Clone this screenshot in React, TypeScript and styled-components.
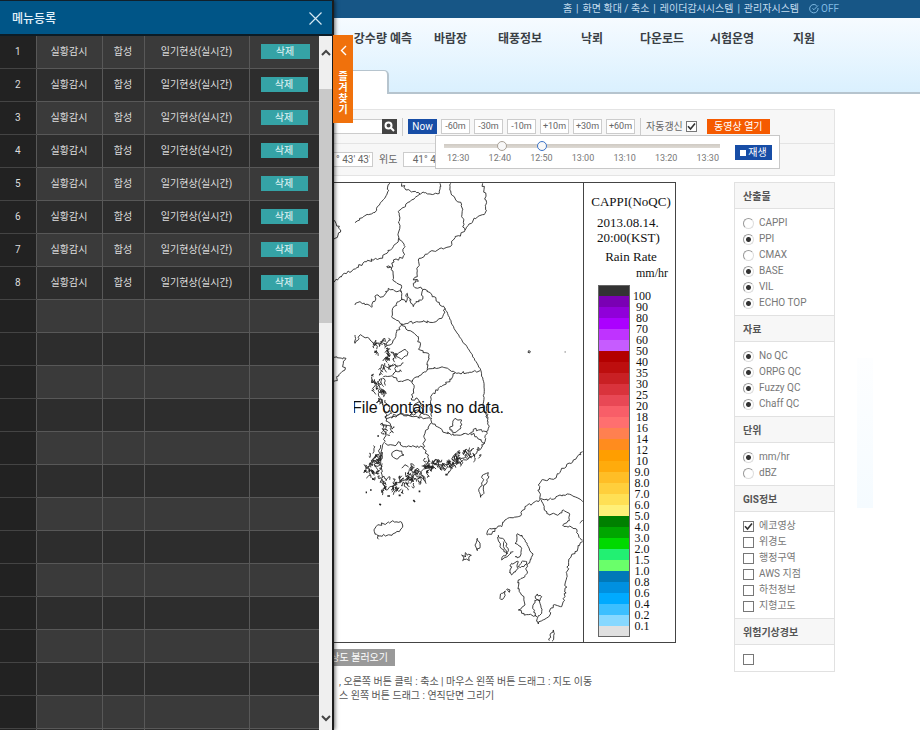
import React from "react";
import styled, { createGlobalStyle } from "styled-components";

const GlobalStyle = createGlobalStyle`
  *, *::before, *::after { box-sizing: border-box; }
  body {
    margin: 0;
    background: #fff;
    color: #666;
    font: 10px/16px Roboto, "Noto Sans CJK KR", sans-serif;
  }
  button, input { font: inherit; margin: 0; }
  button { border: 0; padding: 0; cursor: pointer; white-space: nowrap; }
  a { color: inherit; text-decoration: none; }
`;

/* ---------- shell ---------- */
const Shell = styled.div`
  display: grid;
  grid-template-columns: 334px minmax(0, 1fr);
  height: 100vh;
  overflow: hidden;
`;

/* ---------- drawer ---------- */
const Drawer = styled.aside`
  position: relative;
  z-index: 2;
  display: flex;
  flex-direction: column;
  min-height: 0;
  background: #222;
  border-top: 1px solid #10202c;
  border-right: 2px solid #1c1c1c;
  box-shadow: 1px 0 4px rgba(0, 0, 0, 0.6);
`;
const DrawerHead = styled.header`
  display: flex;
  flex: none;
  align-items: center;
  justify-content: space-between;
  height: 35px;
  padding: 2px 10px 0 12px;
  background: #005587;
  border-bottom: 2px solid #0c1c26;
`;
const DrawerTitle = styled.h2`
  margin: 0;
  font-size: 12px;
  font-weight: 500;
  color: #e2f1fa;
`;
const CloseButton = styled.button`
  display: flex;
  background: none;
  color: #d5e8f3;
`;
const DrawerBody = styled.div`
  display: flex;
  flex: 1;
  min-height: 0;
`;
const TableClip = styled.div`
  flex: 1;
  overflow: hidden;
`;
const MenuTable = styled.table`
  width: 100%;
  table-layout: fixed;
  border-collapse: collapse;
  color: #ddd;
`;
const MenuRow = styled.tr<{ $first?: boolean }>`
  height: ${(p) => (p.$first ? 32 : 33)}px;
  background: #3a3a3a;
  &:nth-child(even) { background: #2d2d2d; }
`;
const Cell = styled.td`
  padding: 0;
  text-align: center;
  white-space: nowrap;
  border-bottom: 1px solid #585858;
  border-left: 1px solid #585858;
`;
const NumberCell = styled.th`
  padding: 0;
  font-weight: 400;
  background: #222;
  border-bottom: 1px solid #444;
`;
const DeleteButton = styled.button<{ $wide?: boolean }>`
  width: ${(p) => (p.$wide ? 49 : 47)}px;
  height: 15px;
  line-height: 15px;
  background: #35a3a6;
  color: #e4f6f6;
  display: block;
  margin-left: 11px;
`;
const ScrollRail = styled.div`
  display: flex;
  flex-direction: column;
  width: 13px;
  background: #efefef;
`;
const ScrollButton = styled.button<{ $tall?: boolean }>`
  display: flex;
  align-items: center;
  justify-content: center;
  height: ${(p) => (p.$tall ? 32 : 24)}px;
  background: none;
  color: #444;
`;
const ScrollTrack = styled.div`
  flex: 1;
  padding-top: 21px;
`;
const ScrollThumb = styled.div`
  height: 38%;
  background: #c9c9c9;
`;
const DrawerTab = styled.button`
  position: absolute;
  top: 34px;
  left: 100%;
  display: flex;
  flex-direction: column;
  align-items: center;
  gap: 15px;
  width: 20px;
  height: 88px;
  padding-top: 10px;
  margin-left: 1px;
  background: #f0710c;
  color: #fff;
  font-weight: 700;
  line-height: 11px;
`;
const TabLabel = styled.span`
  width: 10px;
  white-space: normal;
  word-break: break-all;
`;

/* ---------- page ---------- */
const Page = styled.div`
  min-width: 0;
  overflow: hidden;
`;
const TopBar = styled.nav`
  display: flex;
  align-items: center;
  justify-content: flex-end;
  gap: 4px;
  height: 18px;
  padding-right: 81px;
  background: #175686;
  color: #c4dcee;
  white-space: nowrap;
`;
const Toggle = styled.button`
  display: flex;
  align-items: center;
  gap: 2px;
  margin-left: 6px;
  background: none;
  color: #7fb9e2;
`;
const MainHead = styled.header`
  display: flex;
  flex-direction: column;
  justify-content: space-between;
  height: 76px;
  background: linear-gradient(#f6fbff, #daf0fe);
  border-bottom: 2px solid #b6c4ce;
`;
const MainNav = styled.nav`
  display: grid;
  grid-template-columns: 78px 64px 83px 59px 70px 83px 50px;
  height: 43px;
  line-height: 43px;
  font-size: 12px;
  font-weight: 700;
  color: #3a3f45;
  white-space: nowrap;
`;
const NavLink = styled.a<{ $clip?: boolean }>`
  padding-left: ${(p) => (p.$clip ? 0 : 22)}px;
  ${(p) => p.$clip && "display:flex; justify-content:flex-end;"}
`;
const PageTab = styled.div`
  width: 55px;
  height: 24px;
  margin-bottom: -2px;
  background: #fff;
  border: 1px solid #b6c4ce;
  border-width: 1px 2px 0 0;
  border-radius: 0 5px 0 0;
`;
const Filters = styled.section`
  position: relative;
  margin: 15px 85px 0 0;
  height: 67px;
  background: #f7f7f7;
  border: 1px solid #e4e4e4;
  border-left: 0;
`;
const FilterRow = styled.div`
  display: flex;
  align-items: center;
  height: 34px;
  border-bottom: 1px solid #e4e4e4;
  white-space: nowrap;
`;
const SearchInput = styled.input`
  width: 48px;
  height: 15px;
  border: 1px solid #ccc;
  border-width: 1px 0;
  background: #fff;
`;
const SearchButton = styled.button`
  display: flex;
  align-items: center;
  justify-content: center;
  width: 15px;
  height: 15px;
  background: #444;
  color: #fff;
`;
const Rule = styled.span<{ $gap?: number }>`
  width: 1px;
  height: 18px;
  margin: 0 ${(p) => p.$gap || 5}px;
  background: #ccc;
`;
const Solid = styled.button<{ $tone: "blue" | "orange"; $w: number }>`
  width: ${(p) => p.$w}px;
  height: 15px;
  line-height: 15px;
  background: ${(p) => (p.$tone === "blue" ? "#174da6" : "#f55a00")};
  color: #fff;
`;
const Steps = styled.div`
  display: flex;
  gap: 4px;
  margin-left: 4px;
`;
const Step = styled.button`
  width: 29px;
  height: 15px;
  line-height: 13px;
  font-size: 9px;
  background: #fff;
  border: 1px solid #ccc;
  color: #666;
`;
const AutoLabel = styled.label`
  display: flex;
  align-items: center;
  gap: 3px;
  margin-right: 10px;
`;
const CoordRow = styled.div`
  display: flex;
  align-items: center;
  height: 31px;
  gap: 6px;
`;
const CoordInput = styled.input<{ $w: number }>`
  width: ${(p) => p.$w}px;
  height: 15px;
  padding: 0 2px;
  border: 1px solid #ccc;
  border-left-width: ${(p) => (p.$w > 40 ? 1 : 0)}px;
  background: #fff;
  color: #666;
  text-align: ${(p) => (p.$w > 40 ? "center" : "right")};
`;
const Player = styled.div`
  position: absolute;
  top: 25px;
  left: 101px;
  display: flex;
  align-items: center;
  justify-content: space-between;
  width: 345px;
  height: 34px;
  padding: 0 7px 0 8px;
  background: #fff;
  border: 1px solid #c8c8c8;
`;
const Timeline = styled.div`
  width: 276px;
`;
const Sliders = styled.div`
  display: grid;
  height: 12px;
  align-items: center;
  background: linear-gradient(#cfcac3, #dedad4) center / 100% 4px no-repeat;
`;
const Range = styled.input<{ $active?: boolean }>`
  grid-area: 1 / 1;
  appearance: none;
  width: 100%;
  height: 12px;
  background: none;
  pointer-events: none;
  &::-webkit-slider-thumb {
    appearance: none;
    pointer-events: auto;
    width: 10px;
    height: 10px;
    border-radius: 50%;
    background: #f8f8f8;
    border: 1px solid ${(p) => (p.$active ? "#3c74c8" : "#a9a196")};
  }
`;
const Times = styled.div`
  display: flex;
  justify-content: space-between;
  padding: 0 1px 0 3px;
  line-height: 12px;
  font-size: 9px;
  color: #777;
`;
const PlayIcon = styled.i`
  display: inline-block;
  width: 6px;
  height: 6px;
  margin-right: 2px;
  background: #fff;
`;
const Content = styled.main`
  display: grid;
  grid-template-columns: minmax(0, 1fr) 101px 16px;
  padding: 6px 47px 0 0;
  column-gap: 22px;
`;
const MapColumn = styled.div`
  min-width: 0;
  padding-right: 36px;
`;
const MapBox = styled.section`
  display: grid;
  grid-template-columns: minmax(0, 1fr) 92px;
  border: 1px solid #444;
  border-left: 0;
`;
const MapArea = styled.div`
  position: relative;
  overflow: hidden;
`;
const MapSvg = styled.svg`
  display: block;
  width: 100%;
  height: 459px;
`;
const NoData = styled.p`
  position: absolute;
  top: 215px;
  left: 20px;
  margin: 0;
  overflow: hidden;
  display: flex;
  justify-content: flex-end;
  width: 150px;
  font: 16px/20px "Liberation Sans", sans-serif;
  color: #111;
  white-space: nowrap;
`;
const Legend = styled.div`
  border-left: 1px solid #444;
  padding: 11px 3px 0 6px;
  font: 13px/15px "Liberation Serif", serif;
  color: #111;
  white-space: nowrap;
`;
const LegendLine = styled.div<{ $align?: string; $gap?: number; $small?: boolean }>`
  text-align: ${(p) => p.$align || "left"};
  margin-bottom: ${(p) => p.$gap || 0}px;
  padding: 0 ${(p) => (p.$small ? 4 : 0)}px 0 ${(p) => (p.$align ? 0 : 7)}px;
  font-size: ${(p) => (p.$small ? 12 : 13)}px;
`;
const Scale = styled.div`
  display: flex;
  gap: 3px;
  padding-left: 8px;
`;
const Swatches = styled.div`
  width: 32px;
  height: 352px;
  border: 1px solid #666;
`;
const Swatch = styled.div<{ $c: string; $end?: boolean }>`
  height: ${(p) => (p.$end ? 10 : 11)}px;
  background: ${(p) => p.$c};
`;
const Ticks = styled.div`
  padding-top: 6px;
  min-width: 17px;
  text-align: center;
  font-size: 12px;
  line-height: 11px;
`;

const Caption = styled.div`
  margin-top: 6px;
`;
const LoadButton = styled.button`
  display: flex;
  justify-content: flex-end;
  width: 61px;
  height: 17px;
  padding-right: 7px;
  overflow: hidden;
  line-height: 17px;
  background: #999;
  color: #fff;
`;
const Help = styled.p`
  margin: 9px 0 0 5px;
  line-height: 14px;
  color: #555;
  white-space: pre-line;
`;

/* ---------- side options ---------- */
const Side = styled.aside`
  align-self: start;
  border: 1px solid #e1e1e1;
  border-top: 0;
`;
const Group = styled.fieldset`
  margin: 0;
  padding: 0;
  border: 0;
  min-width: 0;
`;
const GroupTitle = styled.legend`
  display: block;
  width: 100%;
  height: 27px;
  padding: 0 8px;
  line-height: 27px;
  font-weight: 700;
  color: #555;
  background: #f7f7f7;
  border: 1px solid #e1e1e1;
  border-width: 1px 0;
`;
const Options = styled.div`
  padding: 6px 8px 4px;
`;
const Option = styled.label`
  display: flex;
  align-items: center;
  gap: 5px;
  height: 16px;
  color: #777;
  white-space: nowrap;
`;
const Mark = styled.input`
  appearance: none;
  flex: none;
  width: 11px;
  height: 11px;
  background: #fff;
  border: 1px solid #777;
  &[type="radio"] {
    border-radius: 50%;
    border-color: #999 #ddd #ddd #999;
  }
  &[type="radio"]:checked {
    background: radial-gradient(circle, #333 0 2px, #fff 3px);
  }
  &[type="checkbox"]:checked {
    background: url("data:image/svg+xml,%3Csvg xmlns='http://www.w3.org/2000/svg' viewBox='0 0 9 9'%3E%3Cpath d='M1 4.2 3.5 7 8 1.5' fill='none' stroke='%23333' stroke-width='1.6'/%3E%3C/svg%3E") center / 9px no-repeat #fff;
  }
`;
const QuickStrip = styled.div`
  height: 150px;
  margin-top: 176px;
  background: linear-gradient(#fdfeff, #f5fbff);
`;

/* ---------- coastline drawing ---------- */
type Pt = [number, number];

function seeded(seed: number) {
  let s = seed;
  return () => {
    s = (s * 16807) % 2147483647;
    return s / 2147483647 - 0.5;
  };
}

/* Breaks each segment into short steps with a little noise, like a digitised coast. */
function coast(text: string, amount = 8): string {
  const pts = text.trim().split(/\s+/).map((p) => p.split(",").map(Number) as Pt);
  const rnd = seeded(Math.abs(Math.round(pts[0][0] * 31 + pts[0][1] * 17)) + 7);
  let d = `M${pts[0][0]} ${pts[0][1]}`;
  for (let i = 1; i < pts.length; i++) {
    const [ax, ay] = pts[i - 1];
    const [bx, by] = pts[i];
    const n = Math.max(1, Math.round(Math.hypot(bx - ax, by - ay) / 6));
    for (let k = 1; k <= n; k++) {
      const j = k === n ? 0 : amount;
      d += `L${(ax + ((bx - ax) * k) / n + rnd() * j).toFixed(1)} ${(ay + ((by - ay) * k) / n + rnd() * j).toFixed(1)}`;
    }
  }
  return d;
}

function islets(cx: number, cy: number, rx: number, ry: number, count: number): string {
  const rnd = seeded(cx * 13 + cy * 7 + 3);
  let d = "";
  for (let i = 0; i < count; i++) {
    let x = cx + rnd() * 2 * rx;
    let y = cy + rnd() * 2 * ry;
    d += `M${x.toFixed(1)} ${y.toFixed(1)}`;
    for (let k = 0; k < 4; k++) {
      x += rnd() * 14;
      y += rnd() * 18;
      d += `L${x.toFixed(1)} ${y.toFixed(1)}`;
    }
  }
  return d;
}

const north = [
  "180,10 170,45 150,70 130,98 100,110 75,128",
  "215,10 228,30 260,38 300,42 328,40 330,10",
  "270,42 240,65 205,95 208,150 205,180 190,200 150,235 110,245 70,268 30,290 8,308",
  "208,175 225,200 218,235 190,240 185,262 170,260 185,264 188,300 215,320 214,360 188,385 185,410 215,432",
  "362,10 365,45 395,75 395,110 405,150",
  "458,10 468,60 465,100 430,120 405,150 370,180 360,200 300,215 265,240 262,290 250,300 265,304 250,310 252,320 285,328 345,385",
  "75,375 90,365 125,382 140,345 160,350 175,325 215,335",
  "215,355 228,367 232,340 250,380 258,365 275,360 278,330",
  "345,385 338,410 318,425 260,425 215,432 200,455 195,475 180,495 150,490 130,495 120,480 90,465 75,490 75,465",
  "215,432 240,452 265,470 270,510 295,520 292,570 248,600 205,605 190,590 160,590",
  "292,570 340,562 380,580 450,572",
  "248,600 250,630 245,660 262,655 282,680",
  "375,580 360,605 325,625 302,650 305,710",
  "205,520 225,508 232,525 215,538 200,530 205,520",
  "8,118 18,130 32,150 15,175 8,185",
  "8,530 48,535 40,550 45,570 20,590 22,602 8,605",
  "150,600 145,640 158,670 170,715 210,700 250,705 262,690 300,712",
];
const south = [
  "165,0 185,40 165,50 185,80 160,75 165,110 155,150 150,165",
  "185,55 210,42 250,50 305,55 305,68",
  "165,130 195,138 205,125 220,140 280,142 285,100 305,68 345,98 380,105 420,100",
  "245,50 250,20 270,5 280,40 265,55",
  "280,142 300,185",
  "185,162 195,152 215,153 222,165 205,175 190,172 185,162",
  "360,90 375,55 395,60 390,88 375,98 360,90",
  "475,10 470,40 475,85 465,125 440,160 410,180 385,190 350,195 315,190 290,205 250,225 225,240 200,250 170,270 155,235 150,165",
  "465,130 440,110 422,98 430,88 445,90 470,95",
  "458,225 475,218 475,235 462,255 462,280 452,292 447,275 458,245 458,225",
  "133,395 140,378 175,366 212,365 218,375 208,395 180,405 145,408 133,395",
  "145,405 146,418",
];
const kyushu = [
  "398,155 370,180 335,205 315,235 275,240 265,255 270,298 225,320 205,350 165,360 155,380 120,385 112,405 125,403 135,385",
  "270,298 305,298 330,285 365,285 398,305",
  "275,300 290,340 325,345 340,330 358,340 358,362 338,375 375,385 390,415 398,420",
  "398,425 375,455 360,475 350,520 345,590 335,620 310,615 298,635 300,645 265,672 262,655 275,640 270,610 255,590 262,582 275,590 270,602 255,600 248,625 260,650 215,640 205,630 225,615 222,590 208,575 205,540 225,530 235,490 248,465 235,440 215,405 200,405 195,430 215,445 210,470 195,470",
  "145,405 165,425 175,450 155,480 190,455",
  "145,410 150,440 172,462 160,425",
  "185,490 205,485 205,505 185,525 180,510 185,490",
  "205,500 215,485 230,485 222,500 205,500",
  "82,415 90,432 82,452 75,435 82,415",
  "35,465 48,470 46,458 52,466 64,466 56,474 58,482 48,478 38,482 42,474 35,465",
  "152,598 155,580 166,573 158,598 152,598",
  "170,568 180,570 178,577 170,568",
  "298,722 300,705 310,690 313,700 306,724",
  "398,360 390,370",
];

const Coastlines = () => (
  <MapSvg viewBox="334 183 250 459" preserveAspectRatio="xMinYMin slice" aria-label="한반도 해안선">
    <g fill="none" stroke="#222" strokeWidth="2.6" strokeLinejoin="round">
      <g transform="translate(330 180) scale(.3333)">
        {north.map((p) => <path key={p} d={coast(p)} />)}
        <path d={coast("345,385 375,450 420,515 450,565 462,610 460,690 475,715", 3)} />
        <path d={islets(155, 500, 22, 18, 14) + islets(175, 555, 28, 40, 24) + islets(145, 610, 16, 22, 14) + islets(155, 650, 8, 25, 8)} />
        <path d="M596 512l5 2 -2 5 -5 -2ZM704 516h3" />
      </g>
      <g transform="translate(330 400) scale(.3333)">
        {south.map((p) => <path key={p} d={coast(p)} />)}
        <path d={islets(130, 205, 24, 34, 30) + islets(140, 172, 18, 14, 12) + islets(192, 256, 36, 16, 20) + islets(230, 240, 24, 18, 16) + islets(268, 218, 34, 26, 26) + islets(308, 194, 26, 16, 20) + islets(350, 192, 20, 10, 12) + islets(382, 185, 20, 24, 20) + islets(425, 160, 24, 14, 12) + islets(172, 90, 16, 20, 7)} />
        <path d="M172 288h8M206 286h6M148 312l5 3M250 300l5 6M346 224h7M107 277h4M142 108h5M266 274h5M120 270h5" strokeWidth="5" />
      </g>
      <g transform="translate(450 400) scale(.3333)">
        {kyushu.map((p) => <path key={p} d={coast(p)} />)}
      </g>
    </g>
  </MapSvg>
);

/* ---------- data ---------- */
const colours = [
  "#333333", "#7a00b4", "#9000d9", "#ab00ff", "#bf33ff", "#c65cff",
  "#b30000", "#bd0e0e", "#c92024", "#d9333c", "#e84855", "#f85e68", "#ff6f6f",
  "#ff8050", "#ff8c1e", "#ff9e00", "#ffab0c", "#ffbe26", "#ffcf3c", "#ffe055", "#fff078",
  "#008000", "#00a600", "#00d900", "#22f072", "#6aff6a",
  "#0078b8", "#0090e0", "#00aaff", "#3cbfff", "#87d8ff", "#e0e0e0",
];
const ticks = "100 90 80 70 60 50 40 35 30 25 20 18 16 14 12 10 9.0 8.0 7.0 6.0 5.0 4.0 3.0 2.0 1.5 1.0 0.8 0.6 0.4 0.2 0.1".split(" ");
const steps = ["-60m", "-30m", "-10m", "+10m", "+30m", "+60m"];
const times = ["12:30", "12:40", "12:50", "13:00", "13:10", "13:20", "13:30"];
const nav = ["바람장", "태풍정보", "낙뢰", "다운로드", "시험운영", "지원"];
const groups: { title: string; type: "radio" | "checkbox"; items: [string, boolean][] }[] = [
  { title: "산출물", type: "radio", items: [["CAPPI", false], ["PPI", true], ["CMAX", false], ["BASE", true], ["VIL", true], ["ECHO TOP", true]] },
  { title: "자료", type: "radio", items: [["No QC", true], ["ORPG QC", true], ["Fuzzy QC", true], ["Chaff QC", true]] },
  { title: "단위", type: "radio", items: [["mm/hr", true], ["dBZ", false]] },
  { title: "GIS정보", type: "checkbox", items: [["에코영상", true], ["위경도", false], ["행정구역", false], ["AWS 지점", false], ["하천정보", false], ["지형고도", false]] },
  { title: "위험기상경보", type: "checkbox", items: [["", false]] },
];

const Chevron = ({ d, w, h }: { d: string; w: number; h: number }) => (
  <svg width={w} height={h} viewBox={`0 0 ${w} ${h}`} fill="none" stroke="currentColor" strokeWidth="2">
    <path d={d} />
  </svg>
);

export default function App() {
  return (
    <>
      <GlobalStyle />
      <Shell>
        <Drawer>
          <DrawerHead>
            <DrawerTitle>메뉴등록</DrawerTitle>
            <CloseButton aria-label="닫기">
              <svg width="13" height="13" viewBox="0 0 13 13" fill="none" stroke="currentColor" strokeWidth="1.2">
                <path d="M.5.5l12 12M12.5.5l-12 12" />
              </svg>
            </CloseButton>
          </DrawerHead>
          <DrawerBody>
            <TableClip>
              <MenuTable>
                <colgroup>
                  <col width="36" /><col width="66" /><col width="42" /><col width="105" /><col />
                </colgroup>
                <tbody>
                  {Array.from({ length: 22 }, (_, i) => (
                    <MenuRow key={i} $first={i === 0}>
                      <NumberCell scope="row">{i < 8 ? i + 1 : ""}</NumberCell>
                      <Cell>{i < 8 && "실황감시"}</Cell>
                      <Cell>{i < 8 && "합성"}</Cell>
                      <Cell>{i < 8 && "일기현상(실시간)"}</Cell>
                      <Cell>{i < 8 && <DeleteButton $wide={i === 0}>삭제</DeleteButton>}</Cell>
                    </MenuRow>
                  ))}
                </tbody>
              </MenuTable>
            </TableClip>
            <ScrollRail>
              <ScrollButton $tall aria-label="위로"><Chevron w={10} h={7} d="M1 6l4-4 4 4" /></ScrollButton>
              <ScrollTrack><ScrollThumb /></ScrollTrack>
              <ScrollButton aria-label="아래로"><Chevron w={10} h={7} d="M1 1l4 4 4-4" /></ScrollButton>
            </ScrollRail>
          </DrawerBody>
          <DrawerTab>
            <svg width="7" height="11" viewBox="0 0 7 11" fill="none" stroke="currentColor" strokeWidth="1.4">
              <path d="M6 1L1.500 5.500 6 10" />
            </svg>
            <TabLabel>즐겨찾기</TabLabel>
          </DrawerTab>
        </Drawer>

        <Page>
          <TopBar>
            <a href="#home">홈</a>|<a href="#zoom">화면 확대 / 축소</a>|<a href="#radar">레이더감시시스템</a>|<a href="#admin">관리자시스템</a>
            <Toggle>
              <svg width="10" height="10" viewBox="0 0 10 10" fill="none" stroke="currentColor">
                <path d="M7.600 1.500A4.200 4.200 0 1 0 9 4M3.500 4.500l1.500 1.200L9 1.500" />
              </svg>
              OFF
            </Toggle>
          </TopBar>
          <MainHead>
            <MainNav>
              <NavLink $clip href="#rain">강수량 예측</NavLink>
              {nav.map((n) => <NavLink key={n} href={"#" + n}>{n}</NavLink>)}
            </MainNav>
            <PageTab />
          </MainHead>
          <Filters>
            <FilterRow>
              <SearchInput aria-label="검색" />
              <SearchButton aria-label="찾기">
                <svg width="11" height="11" viewBox="0 0 11 11" fill="none" stroke="currentColor" strokeWidth="2">
                  <circle cx="4.500" cy="4.500" r="3" /><path d="M6.800 6.800L10 10" />
                </svg>
              </SearchButton>
              <Rule />
              <Solid $tone="blue" $w={29}>Now</Solid>
              <Steps>{steps.map((s) => <Step key={s}>{s}</Step>)}</Steps>
              <Rule />
              <AutoLabel>자동갱신 <Mark type="checkbox" defaultChecked /></AutoLabel>
              <Solid $tone="orange" $w={63}>동영상 열기</Solid>
            </FilterRow>
            <CoordRow>
              <CoordInput $w={39} aria-label="경도" defaultValue={"° 43' 43\""} />
              <label htmlFor="lat">위도</label>
              <CoordInput $w={66} id="lat" defaultValue={"41° 43' 43\""} />
            </CoordRow>
            <Player>
              <Timeline>
                <Sliders>
                  <Range type="range" aria-label="시작 시각" min={0} max={60} defaultValue={12} />
                  <Range $active type="range" aria-label="종료 시각" min={0} max={60} defaultValue={21} />
                </Sliders>
                <Times>{times.map((t) => <span key={t}>{t}</span>)}</Times>
              </Timeline>
              <Solid $tone="blue" $w={37}><PlayIcon />재생</Solid>
            </Player>
          </Filters>
          <Content>
            <MapColumn>
              <MapBox>
                <MapArea>
                  <Coastlines />
                  <NoData>File contains no data.</NoData>
                </MapArea>
                <Legend>
                  <LegendLine $align="center" $gap={6}>CAPPI(NoQC)</LegendLine>
                  <LegendLine>2013.08.14.</LegendLine>
                  <LegendLine $gap={4}>20:00(KST)</LegendLine>
                  <LegendLine $align="center" $gap={2}>Rain Rate</LegendLine>
                  <LegendLine $align="right" $gap={4} $small>mm/hr</LegendLine>
                  <Scale>
                    <Swatches>
                      {colours.map((c, i) => <Swatch key={c} $c={c} $end={i === 0 || i === colours.length - 1} />)}
                    </Swatches>
                    <Ticks>{ticks.map((t) => <div key={t}>{t}</div>)}</Ticks>
                  </Scale>
                </Legend>
              </MapBox>
              <Caption>
                <LoadButton>상도 불러오기</LoadButton>
                <Help>
                  , 오른쪽 버튼 클릭 : 축소 | 마우스 왼쪽 버튼 드래그 : 지도 이동
                  <br />스 왼쪽 버튼 드래그 : 연직단면 그리기
                </Help>
              </Caption>
            </MapColumn>
            <Side>
              {groups.map((g) => (
                <Group key={g.title}>
                  <GroupTitle>{g.title}</GroupTitle>
                  <Options>
                    {g.items.map(([label, on]) => (
                      <Option key={label}>
                        <Mark type={g.type} name={g.title + label} defaultChecked={on} aria-label={label || g.title} />
                        {label}
                      </Option>
                    ))}
                  </Options>
                </Group>
              ))}
            </Side>
            <QuickStrip />
          </Content>
        </Page>
      </Shell>
    </>
  );
}
